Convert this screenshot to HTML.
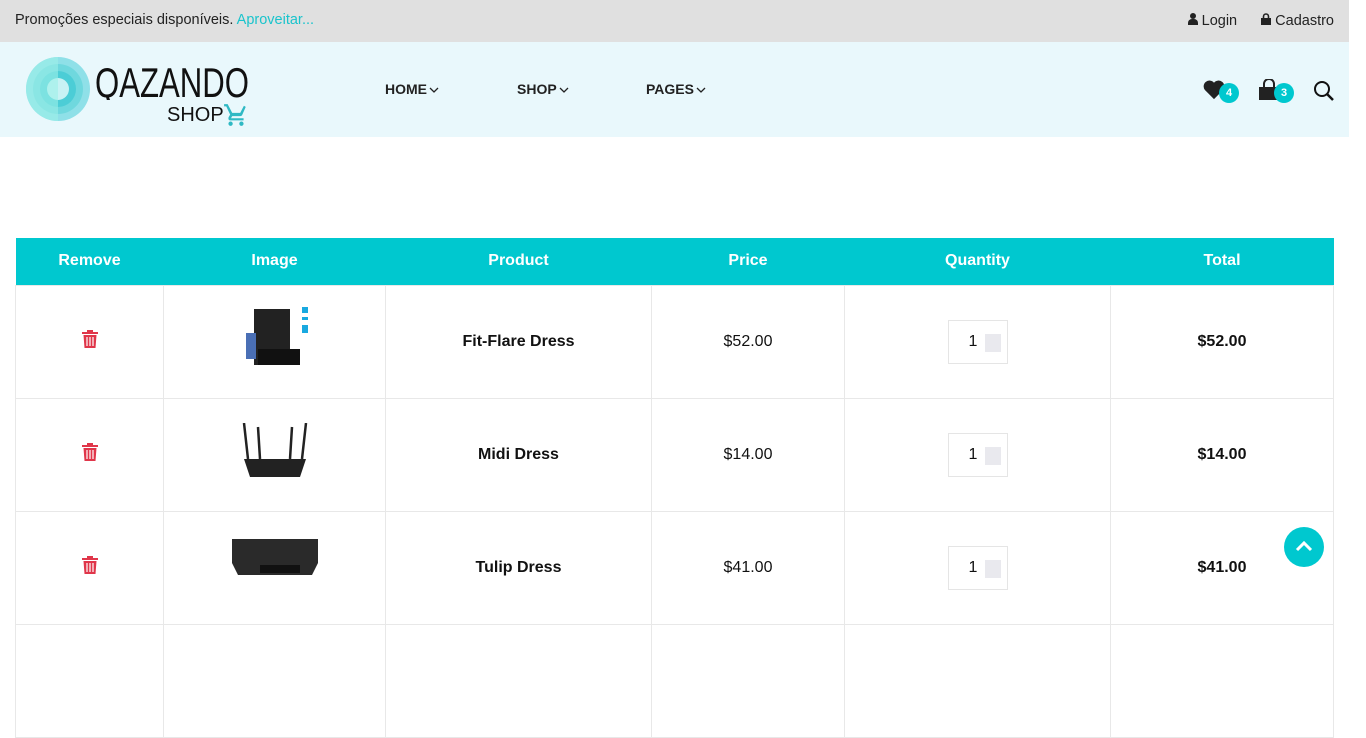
<!DOCTYPE html>
<html><head><meta charset="utf-8"><style>
*{margin:0;padding:0;box-sizing:border-box}
body{width:1366px;height:643px;overflow:hidden;background:#fff;font-family:"Liberation Sans",sans-serif;position:relative}
.top{position:absolute;left:0;top:0;width:1349px;height:42px;background:#e0e0e0;font-size:14.5px;color:#222}
.top .l{position:absolute;left:15px;top:12px}
.top .l span{color:#1ac4cc}
.top .r{position:absolute;right:15px;top:13px;display:flex;gap:24px;align-items:center}
.hdr{position:absolute;left:0;top:42px;width:1349px;height:95px;background:#e9f8fc}
.nav{position:absolute;top:39px;font-weight:bold;font-size:14px;color:#222}
.nav svg{vertical-align:middle;margin-left:2px}
.badge{position:absolute;width:20px;height:20px;border-radius:50%;background:#00c8cf;color:#fff;font-size:11px;font-weight:bold;text-align:center;line-height:20px}
table{position:absolute;left:15px;top:238px;width:1319px;border-collapse:collapse}
th{background:#00c8cf;color:#fff;font-size:16px;height:47px;font-weight:bold}
td{border:1px solid #e8e8e8;height:113px;text-align:center;font-size:16px;color:#111}
td.n{font-weight:bold;font-size:16px}
.q{display:inline-block;width:60px;height:44px;border:1px solid #e5e5e5;position:relative;vertical-align:middle}
.q b{position:absolute;left:20px;top:12px;font-weight:normal;font-size:16px}
.q i{position:absolute;left:36px;top:13px;width:16px;height:18px;background:#e9e9ee}
.up{position:absolute;left:1284px;top:527px;width:40px;height:40px;border-radius:50%;background:#00c8cf}
</style></head><body>
<div class="top"><div class="l">Promoções especiais disponíveis. <span>Aproveitar...</span></div>
<div class="r"><div><svg width="10" height="12" viewBox="0 0 10 12"><circle cx="5" cy="3" r="3" fill="#222"/><path d="M0 12v-2a4 4 0 0 1 4-4h2a4 4 0 0 1 4 4v2z" fill="#222"/></svg> Login</div><div><svg width="10" height="12" viewBox="0 0 10 12"><rect x="0" y="5" width="10" height="7" fill="#222"/><path d="M2.5 5V3.5a2.5 2.5 0 0 1 5 0V5" stroke="#222" stroke-width="1.6" fill="none"/></svg> Cadastro</div></div></div>
<div class="hdr">
<svg style="position:absolute;left:26px;top:15px" width="64" height="64"><circle cx="32" cy="32" r="32" fill="#8fe0e8"/><circle cx="32" cy="32" r="25" fill="#6fd8de"/><circle cx="32" cy="32" r="18" fill="#4ccdd6"/><circle cx="32" cy="32" r="11" fill="#c8f2f4"/><path d="M32 0A32 32 0 0 0 32 64Z" fill="#9cf0e8" opacity=".6"/></svg>
<svg style="position:absolute;left:94px;top:18px" width="160" height="40"><text x="1" y="37" font-family="Liberation Sans" font-size="42" textLength="154" lengthAdjust="spacingAndGlyphs" fill="#111">QAZANDO</text></svg>
<div style="position:absolute;left:167px;top:62px;font-size:20px;color:#111">SHOP</div>
<svg style="position:absolute;left:223px;top:60px" width="26" height="26" viewBox="0 0 24 24"><path fill="#2fb9c4" d="M7 18a2 2 0 1 0 0 4 2 2 0 0 0 0-4zM1 2v2h2l3.6 7.6-1.4 2.4C5 14.4 5 15 5 15.5 5 16.3 5.7 17 6.5 17H19v-2H7.4l1.1-2h7.5c.8 0 1.4-.4 1.7-1L21 4.5 19.3 3.5 15.9 10H8.5L4.3 2zM17 18a2 2 0 1 0 0 4 2 2 0 0 0 0-4z"/></svg>
<div class="nav" style="left:385px">HOME<svg width="10" height="8"><path d="M1 2l4 4 4-4" stroke="#222" stroke-width="1.3" fill="none"/></svg></div>
<div class="nav" style="left:517px">SHOP<svg width="10" height="8"><path d="M1 2l4 4 4-4" stroke="#222" stroke-width="1.3" fill="none"/></svg></div>
<div class="nav" style="left:646px">PAGES<svg width="10" height="8"><path d="M1 2l4 4 4-4" stroke="#222" stroke-width="1.3" fill="none"/></svg></div>
<svg style="position:absolute;left:1203px;top:38px" width="22" height="20" viewBox="0 0 24 22"><path d="M12 21L2 11A6 6 0 0 1 12 3a6 6 0 0 1 10 8z" fill="#222"/></svg><div class="badge" style="left:1219px;top:41px">4</div>
<svg style="position:absolute;left:1258px;top:37px" width="22" height="22"><rect x="1" y="8" width="20" height="13" fill="#222"/><path d="M6 9V5a5 5 0 0 1 10 0v4" stroke="#222" stroke-width="2" fill="none"/></svg><div class="badge" style="left:1274px;top:41px">3</div>
<svg style="position:absolute;left:1313px;top:38px" width="22" height="22"><circle cx="9" cy="9" r="7" stroke="#111" stroke-width="2" fill="none"/><path d="M14 14l6 6" stroke="#111" stroke-width="2.5"/></svg>
</div>
<table>
<tr><th style="width:148px">Remove</th><th style="width:222px">Image</th><th style="width:266px">Product</th><th style="width:193px">Price</th><th style="width:266px">Quantity</th><th>Total</th></tr>
<tr><td><svg width="16" height="18" viewBox="0 0 16 18"><rect x="0" y="2" width="16" height="2" fill="#e0364a"/><rect x="5" y="0" width="6" height="3" fill="#e0364a"/><path d="M1.5 5h13l-1 13h-11z" fill="#e0364a"/><path d="M5 7v9M8 7v9M11 7v9" stroke="#fff" stroke-width="1.2"/></svg></td>
<td><svg width="70" height="64" viewBox="0 0 70 64"><rect x="14" y="2" width="36" height="56" fill="#222"/><rect x="6" y="26" width="10" height="26" fill="#4a6fb5"/><path d="M18 42h42v16H18z" fill="#111"/><rect x="62" y="0" width="6" height="6" fill="#19a9e0"/><rect x="62" y="10" width="6" height="3" fill="#19a9e0"/><rect x="62" y="18" width="6" height="8" fill="#19a9e0"/></svg></td>
<td class="n">Fit-Flare Dress</td><td>$52.00</td><td><span class="q"><b>1</b><i></i></span></td><td class="n">$52.00</td></tr>
<tr><td><svg width="16" height="18" viewBox="0 0 16 18"><rect x="0" y="2" width="16" height="2" fill="#e0364a"/><rect x="5" y="0" width="6" height="3" fill="#e0364a"/><path d="M1.5 5h13l-1 13h-11z" fill="#e0364a"/><path d="M5 7v9M8 7v9M11 7v9" stroke="#fff" stroke-width="1.2"/></svg></td>
<td><svg width="70" height="58" viewBox="0 0 70 58"><path d="M4 0l4 36M18 4l2 32M52 4l-2 32M66 0l-4 36" stroke="#222" stroke-width="2.5"/><path d="M4 36h62l-6 18H10z" fill="#222"/></svg></td>
<td class="n">Midi Dress</td><td>$14.00</td><td><span class="q"><b>1</b><i></i></span></td><td class="n">$14.00</td></tr>
<tr><td><svg width="16" height="18" viewBox="0 0 16 18"><rect x="0" y="2" width="16" height="2" fill="#e0364a"/><rect x="5" y="0" width="6" height="3" fill="#e0364a"/><path d="M1.5 5h13l-1 13h-11z" fill="#e0364a"/><path d="M5 7v9M8 7v9M11 7v9" stroke="#fff" stroke-width="1.2"/></svg></td>
<td><svg width="90" height="64" viewBox="0 0 90 64"><path d="M2 6h86v24l-6 12H8L2 30z" fill="#2a2a2a"/><rect x="30" y="32" width="40" height="8" fill="#111"/></svg></td>
<td class="n">Tulip Dress</td><td>$41.00</td><td><span class="q"><b>1</b><i></i></span></td><td class="n">$41.00</td></tr>
<tr><td></td><td></td><td></td><td></td><td></td><td></td></tr>
</table>
<div class="up"><svg width="40" height="40"><path d="M13 23l7-7 7 7" stroke="#fff" stroke-width="3" fill="none"/></svg></div>
</body></html>
